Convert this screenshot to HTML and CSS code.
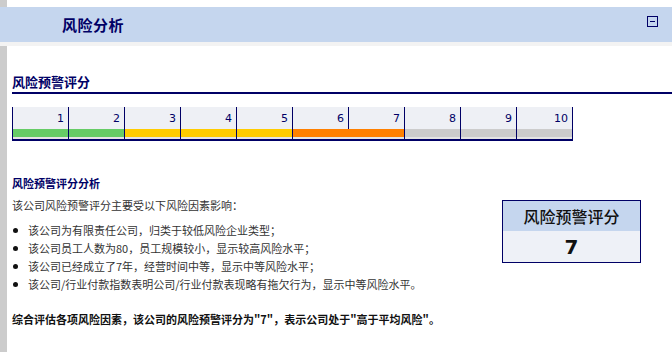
FILE: index.html
```html
<!DOCTYPE html>
<html lang="zh-CN">
<head>
    <meta charset="UTF-8">
    <title>风险分析</title>
    <link rel="stylesheet" href="styles.css">
</head>
<body>
    <div class="panel-head">
        <span class="panel-title">风险分析</span>
        <span class="toggle"></span>
    </div>
    <div class="panel-gap"></div>

    <div class="content">
        <h2 class="section-title">风险预警评分</h2>

        <div class="scale">
            <div class="cell"><div class="num">1</div><div class="bar green"></div><div class="under"></div></div>
            <div class="cell"><div class="num">2</div><div class="bar green"></div><div class="under"></div></div>
            <div class="cell"><div class="num">3</div><div class="bar yellow"></div><div class="under"></div></div>
            <div class="cell"><div class="num">4</div><div class="bar yellow"></div><div class="under"></div></div>
            <div class="cell"><div class="num">5</div><div class="bar yellow"></div><div class="under"></div></div>
            <div class="cell"><div class="num">6</div><div class="bar orange"></div><div class="under"></div></div>
            <div class="cell joined"><div class="num">7</div><div class="bar orange"></div><div class="under"></div></div>
            <div class="cell"><div class="num">8</div><div class="bar grey"></div><div class="under"></div></div>
            <div class="cell"><div class="num">9</div><div class="bar grey"></div><div class="under"></div></div>
            <div class="cell last"><div class="num">10</div><div class="bar grey"></div><div class="under"></div></div>
        </div>

        <div class="analysis">
            <div class="analysis-text">
                <h3 class="sub-title">风险预警评分分析</h3>
                <p class="intro">该公司风险预警评分主要受以下风险因素影响：</p>
                <ul class="factors">
                    <li>该公司为有限责任公司，归类于较低风险企业类型；</li>
                    <li>该公司员工人数为80，员工规模较小，显示较高风险水平；</li>
                    <li>该公司已经成立了7年，经营时间中等，显示中等风险水平；</li>
                    <li>该公司/行业付款指数表明公司/行业付款表现略有拖欠行为，显示中等风险水平。</li>
                </ul>
                <p class="summary">综合评估各项风险因素，该公司的风险预警评分为"7"，表示公司处于"高于平均风险"。</p>
            </div>
            <div class="score-box">
                <div class="score-label">风险预警评分</div>
                <div class="score-value">7</div>
            </div>
        </div>
    </div>
</body>
</html>
```

FILE: styles.css
```css
body {
    margin: 0;
    padding-top: 7px;
    min-height: 345px;
    font-family: "Noto Sans CJK SC", sans-serif;
    background: linear-gradient(to right, #cccccc 7px, #ffffff 7px);
}

.panel-head {
    height: 35px;
    background: #c5d6ee;
    display: flex;
    align-items: center;
    justify-content: space-between;
    padding: 0 14px 0 62px;
}
.panel-title {
    font-size: 15px;
    font-weight: bold;
    color: #000066;
    letter-spacing: 0.5px;
}
.toggle {
    width: 9px;
    height: 9px;
    border: 1px solid #000066;
    margin-top: -7px;
    display: flex;
    align-items: center;
    justify-content: center;
}
.toggle::before {
    content: "";
    width: 5px;
    height: 1px;
    background: #000066;
}
.panel-gap {
    height: 4px;
    background: #f3f3f3;
}

.content {
    padding-left: 12px;
}

.section-title {
    margin: 28px 0 0 0;
    font-size: 13px;
    line-height: 16px;
    font-weight: bold;
    color: #000066;
    padding-bottom: 2px;
    border-bottom: 2px solid #000066;
}

.scale {
    display: flex;
    width: 561px;
    margin-top: 13px;
    border-bottom: 2px solid #000066;
    font-family: "DejaVu Sans", Verdana, sans-serif;
}
.cell {
    width: 56px;
}
.cell.last {
    width: 57px;
    border-right: 1px solid #000066;
    box-sizing: border-box;
}
.num, .bar, .under {
    border-left: 1px solid #000066;
}
.num {
    height: 22px;
    background: #eef0f5;
    font-size: 11px;
    line-height: 24px;
    color: #000066;
    text-align: right;
    padding-right: 4px;
}
.bar {
    height: 8px;
}
.under {
    height: 2px;
    background: #e4e4e4;
}
.green { background: #66cc66; }
.yellow { background: #ffcc00; }
.orange { background: #ff8000; }
.grey { background: #cccccc; }
.joined .bar { border-left-color: #ff8000; }
.joined .under { border-left-color: #e4e4e4; }

.analysis {
    display: flex;
    align-items: flex-start;
    margin-top: 35px;
}
.analysis-text {
    flex: 1;
}
.sub-title {
    margin: 0;
    font-size: 11px;
    line-height: 14px;
    font-weight: bold;
    color: #000066;
}
.intro {
    margin: 6px 0 0 0;
    font-size: 11px;
    line-height: 18px;
    color: #333333;
}
.factors {
    margin: 7px 0 0 0;
    padding: 0;
    list-style: none;
    font-size: 11px;
    line-height: 18px;
    color: #333333;
}
.factors li {
    position: relative;
    padding-left: 16px;
}
.factors li::before {
    content: "";
    position: absolute;
    left: 1px;
    top: 7px;
    width: 5px;
    height: 5px;
    border-radius: 50%;
    background: #111111;
}
.summary {
    margin: 17px 0 0 0;
    font-size: 11px;
    line-height: 18px;
    font-weight: bold;
    color: #111111;
}

.score-box {
    width: 139px;
    box-sizing: border-box;
    margin: 24px 31px 0 0;
    border: 1px solid #000066;
    text-align: center;
    color: #111111;
}
.score-label {
    height: 30px;
    line-height: 31px;
    background: #c5d6ee;
    font-size: 16px;
    font-weight: 500;
}
.score-value {
    height: 31px;
    line-height: 32px;
    background: #eef1f7;
    font-family: "DejaVu Sans", Verdana, sans-serif;
    font-size: 20px;
    font-weight: bold;
}
```
